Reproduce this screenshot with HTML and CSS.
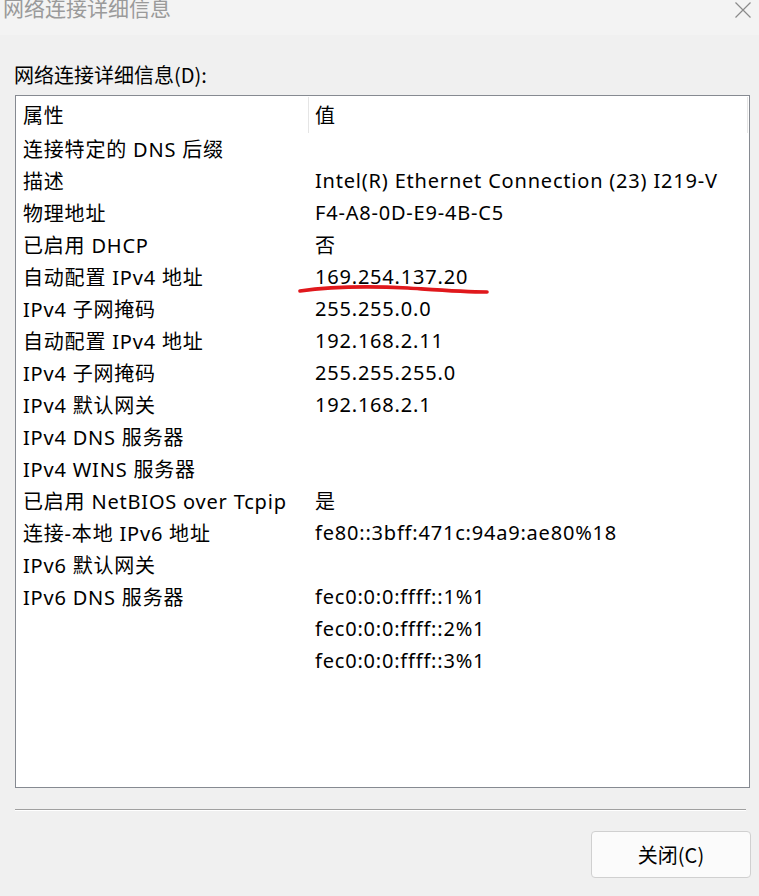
FILE: index.html
```html
<!DOCTYPE html>
<html lang="zh-CN">
<head>
<meta charset="utf-8">
<link rel="stylesheet" href="styles.css">
</head>
<body>
<div class="window">
  <div class="titlebar">
    <span class="title">网络连接详细信息</span>
    <svg class="close" width="16" height="16" viewBox="0 0 16 16"><path d="M0.5 0.5 L15.5 15.5 M15.5 0.5 L0.5 15.5" stroke="#8a8a8a" stroke-width="1.2" fill="none"/></svg>
  </div>
  <div class="content">
    <div class="label">网络连接详细信息(D):</div>
    <div class="listbox">
      <div class="header">
        <div class="hcell c1">属性</div>
        <div class="hcell c2">值</div>
        <div class="hcell c3"></div>
      </div>
      <div class="row"><div class="c1">连接特定的 DNS 后缀</div><div class="c2"></div></div>
      <div class="row"><div class="c1">描述</div><div class="c2">Intel(R) Ethernet Connection (23) I219-V</div></div>
      <div class="row"><div class="c1">物理地址</div><div class="c2">F4-A8-0D-E9-4B-C5</div></div>
      <div class="row"><div class="c1">已启用 DHCP</div><div class="c2">否</div></div>
      <div class="row"><div class="c1">自动配置 IPv4 地址</div><div class="c2 marked">169.254.137.20<svg class="scribble" width="200" height="14" viewBox="0 0 200 14"><path d="M2 7 C 30 3, 70 2, 110 4 C 140 6, 165 8, 189 8" stroke="#e0181c" stroke-width="3.6" stroke-linecap="round" fill="none"/></svg></div></div>
      <div class="row"><div class="c1">IPv4 子网掩码</div><div class="c2">255.255.0.0</div></div>
      <div class="row"><div class="c1">自动配置 IPv4 地址</div><div class="c2">192.168.2.11</div></div>
      <div class="row"><div class="c1">IPv4 子网掩码</div><div class="c2">255.255.255.0</div></div>
      <div class="row"><div class="c1">IPv4 默认网关</div><div class="c2">192.168.2.1</div></div>
      <div class="row"><div class="c1">IPv4 DNS 服务器</div><div class="c2"></div></div>
      <div class="row"><div class="c1">IPv4 WINS 服务器</div><div class="c2"></div></div>
      <div class="row"><div class="c1">已启用 NetBIOS over Tcpip</div><div class="c2">是</div></div>
      <div class="row"><div class="c1">连接-本地 IPv6 地址</div><div class="c2">fe80::3bff:471c:94a9:ae80%18</div></div>
      <div class="row"><div class="c1">IPv6 默认网关</div><div class="c2"></div></div>
      <div class="row"><div class="c1">IPv6 DNS 服务器</div><div class="c2">fec0:0:0:ffff::1%1</div></div>
      <div class="row"><div class="c1"></div><div class="c2">fec0:0:0:ffff::2%1</div></div>
      <div class="row"><div class="c1"></div><div class="c2">fec0:0:0:ffff::3%1</div></div>
    </div>
    <div class="separator"></div>
    <div class="footer">
      <button class="btn">关闭(C)</button>
    </div>
  </div>
</div>
</body>
</html>
```
FILE: styles.css
```css
* { box-sizing: border-box; }
html, body {
  margin: 0;
  padding: 0;
  background: #f0f0f0;
}
body {
  font-family: "Noto Sans", "Noto Sans CJK SC", sans-serif;
  color: #000;
  width: 759px;
  height: 896px;
  overflow: hidden;
}
.window {
  display: flex;
  flex-direction: column;
  height: 896px;
}
.titlebar {
  height: 35px;
  background: #f3f3f3;
  display: flex;
  justify-content: space-between;
  align-items: flex-start;
  padding: 0 8px 0 3px;
  overflow: hidden;
}
.title {
  font-family: "Noto Sans CJK SC", sans-serif;
  font-size: 21px;
  line-height: 21px;
  color: #9a9a9a;
  margin-top: -3px;
}
.close {
  margin-top: 2px;
}
.content {
  padding: 27px 8px 0 15px;
  display: flex;
  flex-direction: column;
}
.label {
  font-family: "Noto Sans CJK SC", sans-serif;
  font-size: 20px;
  line-height: 26px;
  margin-left: -1px;
  height: 33px;
}
.listbox {
  width: 735px;
  height: 693px;
  background: #fff;
  border: 1px solid #868a91;
  padding: 0;
  font-size: 20px;
  letter-spacing: 0.8px;
}
.header {
  display: flex;
  height: 37px;
  padding-top: 1px;
  align-items: stretch;
}
.hcell {
  display: flex;
  align-items: center;
  padding-bottom: 1px;
}
.header .c1 {
  border-right: 1px solid #e5e5e5;
}
.header .c2 {
  border-right: 1px solid #e5e5e5;
}
.c1 {
  width: 293px;
  padding-left: 7px;
  flex: none;
  white-space: nowrap;
}
.c2 {
  width: 439px;
  padding-left: 6px;
  flex: none;
  white-space: nowrap;
}
.c3 { flex: 1; }
.row {
  display: flex;
  height: 32px;
  align-items: center;
  padding-bottom: 1px;
}
.marked {
  position: relative;
}
.scribble {
  position: absolute;
  left: -11px;
  top: 21px;
}
.separator {
  margin-top: 21px;
  height: 2px;
  width: 731px;
  border-top: 1px solid #a0a0a0;
  border-bottom: 1px solid #ffffff;
}
.footer {
  display: flex;
  justify-content: flex-end;
  padding-top: 20px;
}
.btn {
  width: 160px;
  height: 47px;
  background: #fbfbfb;
  border: 1px solid #d0d0d0;
  border-radius: 4px;
  font-family: "Noto Sans CJK SC", sans-serif;
  font-size: 20px;
  color: #000;
  padding: 0;
}
```
